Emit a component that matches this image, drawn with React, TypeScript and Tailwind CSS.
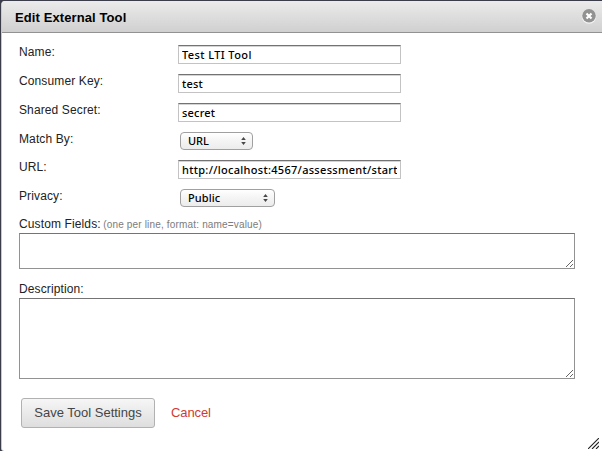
import type { ReactNode } from "react";

const labelText =
  "font-['Liberation_Sans',Arial,sans-serif] text-[12px] leading-4 tracking-[0.12px] text-[#222] whitespace-nowrap";
const fieldText = "font-['Noto_Sans','Open_Sans',sans-serif] text-[11px] leading-[15px] font-medium text-black";

function Row({ label, height, children }: { label: string; height: string; children: ReactNode }) {
  return (
    <div className={`flex items-start ${height}`}>
      <label className={`w-[159px] shrink-0 ${labelText}`}>{label}</label>
      <div className="pt-px">{children}</div>
    </div>
  );
}

function TextField({ value, spacing }: { value: string; spacing: string }) {
  return (
    <input
      type="text"
      defaultValue={value}
      className={`block h-[19px] w-[223px] rounded-none border border-[#c3c3c3] border-t-[#737373] bg-white px-[3px] pt-0 pb-0 shadow-[inset_0_1px_0_#d4d4d4] outline-none ${fieldText} ${spacing}`}
    />
  );
}

function SelectField({ value, width, spacing }: { value: string; width: string; spacing: string }) {
  return (
    <button
      type="button"
      className={`ml-[2px] flex h-[18px] items-center justify-between rounded-[4px] border border-[#a0a0a0] bg-linear-to-b from-white via-[#f4f4f4] to-[#ececec] pr-[6px] pl-[7px] ${width} ${fieldText} ${spacing}`}
    >
      <span className="pb-px">{value}</span>
      <svg width="5" height="8" viewBox="0 0 5 8" fill="#484848">
        <path d="M2.5 0L4.8 3H.2zM2.5 8L.2 5h4.6z" />
      </svg>
    </button>
  );
}

function Grip() {
  return (
    <svg
      className="pointer-events-none absolute right-[2px] bottom-[2px]"
      width="7"
      height="7"
      viewBox="0 0 7 7"
      stroke="#555"
      strokeWidth="0.9"
    >
      <path d="M0 7L7 0M4 7L7 4" />
    </svg>
  );
}

function Area({ height }: { height: string }) {
  return (
    <div className="relative w-[556px]">
      <textarea
        className={`block w-full resize-none rounded-none border border-[#929292] border-t-[#747474] bg-white outline-none ${height}`}
      />
      <Grip />
    </div>
  );
}

export default function App() {
  return (
    <div className="relative flex h-[451px] w-[602px] overflow-hidden bg-[#3b3d4b] pt-px font-['Liberation_Sans',Arial,sans-serif]">
      <div className="w-px shrink-0" />
      <div className="flex flex-1 flex-col rounded-tl-[4px] rounded-bl-[3px] border-l border-[#c9c9cc] bg-white">
        <header className="flex h-8 shrink-0 items-center justify-between rounded-tl-[3px] border-b border-[#929292] bg-linear-to-b from-[#ebebeb] to-[#d0d0d0] pr-[5px] pl-[13px]">
          <h1 className="pt-[2px] text-[13px] leading-4 font-bold tracking-[0.1px] text-black">
            Edit External Tool
          </h1>
          <button type="button" aria-label="Close" className="mb-[2px]">
            <svg width="16" height="16" viewBox="0 0 16 16">
              <circle cx="8" cy="8.5" r="7.3" fill="#f3f3f3" />
              <circle cx="8" cy="7.8" r="6.8" fill="#929292" />
              <path d="M5.5 5.5l5 5M10.5 5.5l-5 5" stroke="#fff" strokeWidth="2.2" />
            </svg>
          </button>
        </header>
        <form className="flex flex-col pt-[11px] pl-[17px]">
          <Row label="Name:" height="h-[29px]">
            <TextField value="Test LTI Tool" spacing="tracking-[0.4px]" />
          </Row>
          <Row label="Consumer Key:" height="h-[29px]">
            <TextField value="test" spacing="tracking-[0.2px]" />
          </Row>
          <Row label="Shared Secret:" height="h-[29px]">
            <TextField value="secret" spacing="tracking-[0.2px]" />
          </Row>
          <Row label="Match By:" height="h-[28px]">
            <SelectField value="URL" width="w-[73px]" spacing="tracking-[0px]" />
          </Row>
          <Row label="URL:" height="h-[29px]">
            <TextField value="http://localhost:4567/assessment/start" spacing="tracking-[0.3px]" />
          </Row>
          <Row label="Privacy:" height="h-[28px]">
            <SelectField value="Public" width="w-[95px]" spacing="tracking-[0.1px]" />
          </Row>
          <div className={`h-[17px] ${labelText}`}>
            Custom Fields:{" "}
            <span className="-ml-px text-[10px] tracking-[0.17px] text-[#7c7c7c]">
              (one per line, format: name=value)
            </span>
          </div>
          <Area height="h-[36px]" />
          <div className={`mt-3 h-[17px] ${labelText}`}>Description:</div>
          <Area height="h-[81px]" />
          <div className="mt-[19px] flex items-center gap-4 pl-[2px] text-[13px]">
            <button
              type="button"
              className="h-[30px] w-[134px] rounded-[3px] border border-[#b1b1b1] bg-linear-to-b from-[#f6f6f6] to-[#dedede] text-[13px] tracking-[0px] whitespace-nowrap text-[#454545]"
            >
              Save Tool Settings
            </button>
            <a href="#" className="tracking-[-0.1px] text-[#cf3b32]">
              Cancel
            </a>
          </div>
        </form>
      </div>
      <svg
        className="pointer-events-none absolute right-[3px] bottom-[2px]"
        width="11"
        height="11"
        viewBox="0 0 11 11"
        stroke="#222"
        strokeWidth="1.1"
      >
        <path d="M0 11L11 0M4 11L11 4M8 11L11 8" />
      </svg>
    </div>
  );
}
